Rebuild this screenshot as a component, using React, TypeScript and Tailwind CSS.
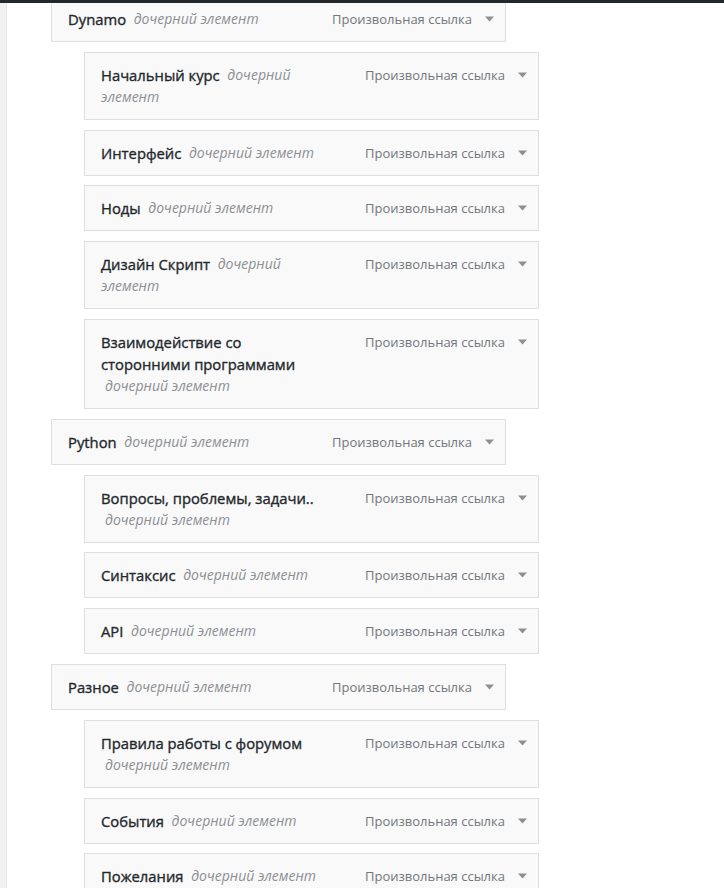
import React from "react";

type Item = { title: string; level: 0 | 1 };

const items: Item[] = [
  { title: "Dynamo", level: 0 },
  { title: "Начальный курс", level: 1 },
  { title: "Интерфейс", level: 1 },
  { title: "Ноды", level: 1 },
  { title: "Дизайн Скрипт", level: 1 },
  { title: "Взаимодействие со сторонними программами", level: 1 },
  { title: "Python", level: 0 },
  { title: "Вопросы, проблемы, задачи..", level: 1 },
  { title: "Синтаксис", level: 1 },
  { title: "API", level: 1 },
  { title: "Разное", level: 0 },
  { title: "Правила работы с форумом", level: 1 },
  { title: "События", level: 1 },
  { title: "Пожелания", level: 1 },
];

function Arrow() {
  return (
    <svg width="9" height="6" viewBox="0 0 9 6" className="ml-[13px] shrink-0">
      <path d="M0 0.5 H9 L4.5 5.5 Z" fill="#8c8f94" />
    </svg>
  );
}

function MenuItem({ item, first }: { item: Item; first: boolean }) {
  return (
    <div
      className={
        (first ? "-mt-[4px] " : "mt-[9.8px] ") +
        (item.level === 1 ? "ml-[33px] " : "") +
        "w-[455px] border border-[#dfdfdf] bg-[#f9f9f9] pl-4 pr-[11px] py-[11px] flex items-start"
      }
    >
      <div className="w-[220px] shrink-0 text-[14px] leading-[22px]">
        <span className="align-top text-[14.8px] leading-[22px] text-[#23282d] [-webkit-text-stroke:0.35px_#23282d]">
          {item.title}
        </span>{" "}
        <span className="align-top ml-1 italic leading-[22px] text-[#8c8f94]">дочерний элемент</span>
      </div>
      <div className="ml-auto flex items-center h-[22px]">
        <span className="text-[13px] leading-[22px] text-[#72777c]">Произвольная ссылка</span>
        <Arrow />
      </div>
    </div>
  );
}

export default function App() {
  return (
    <div
      className="h-screen overflow-hidden bg-[#f1f1f1]"
      style={{ fontFamily: '"Open Sans", "Noto Sans", sans-serif' }}
    >
      <div className="fixed top-0 left-0 right-0 h-[3px] bg-[#23282d] z-10" />
      <div className="flow-root ml-[6px] h-full border-l border-[#e5e5e5] bg-white pl-[44px]">
        {items.map((it, i) => (
          <MenuItem key={i} item={it} first={i === 0} />
        ))}
      </div>
    </div>
  );
}
